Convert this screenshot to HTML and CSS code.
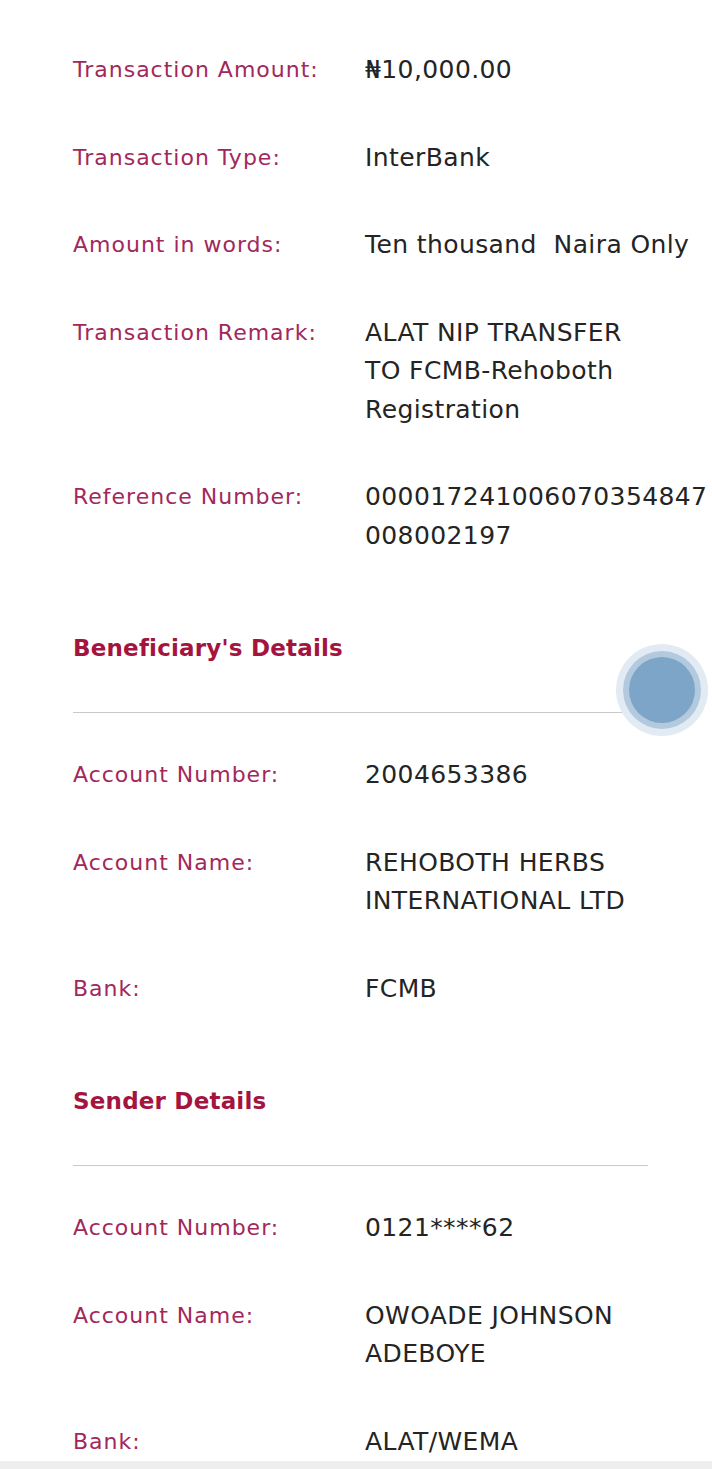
FILE: index.html
```html
<!DOCTYPE html>
<html lang="en">
<head>
<meta charset="utf-8">
<title>Transaction Details</title>
<link rel="stylesheet" href="styles.css">
</head>
<body>
<main class="page">
  <section class="rows">
    <div class="row"><div class="label">Transaction Amount:</div><div class="value">₦10,000.00</div></div>
    <div class="row"><div class="label">Transaction Type:</div><div class="value">InterBank</div></div>
    <div class="row"><div class="label">Amount in words:</div><div class="value nowrap">Ten thousand  Naira Only</div></div>
    <div class="row"><div class="label">Transaction Remark:</div><div class="value">ALAT NIP TRANSFER<br>TO FCMB-Rehoboth<br>Registration</div></div>
    <div class="row"><div class="label">Reference Number:</div><div class="value">000017241006070354847<br>008002197</div></div>
  </section>

  <h2 class="section-title">Beneficiary's Details</h2>
  <hr class="divider">
  <section class="rows">
    <div class="row"><div class="label">Account Number:</div><div class="value">2004653386</div></div>
    <div class="row"><div class="label">Account Name:</div><div class="value">REHOBOTH HERBS<br>INTERNATIONAL LTD</div></div>
    <div class="row"><div class="label">Bank:</div><div class="value">FCMB</div></div>
  </section>

  <h2 class="section-title">Sender Details</h2>
  <hr class="divider">
  <section class="rows">
    <div class="row"><div class="label">Account Number:</div><div class="value">0121****62</div></div>
    <div class="row"><div class="label">Account Name:</div><div class="value">OWOADE JOHNSON<br>ADEBOYE</div></div>
    <div class="row"><div class="label">Bank:</div><div class="value">ALAT/WEMA</div></div>
  </section>
</main>
<div class="bottom-bar"></div>
<div class="touch-dot"><div class="touch-ring"><div class="touch-core"></div></div></div>
</body>
</html>
```

FILE: styles.css
```css
html, body {
  margin: 0;
  padding: 0;
  background: #ffffff;
}
body {
  width: 712px;
  height: 1469px;
  overflow: hidden;
  position: relative;
  font-family: "DejaVu Sans", "Open Sans", sans-serif;
}
.page {
  padding: 51px 0 0 73px;
}
.rows {
  display: flex;
  flex-direction: column;
  gap: 49px;
}
.row {
  display: grid;
  grid-template-columns: 292px auto;
}
.label {
  color: #a2285b;
  font-size: 22px;
  letter-spacing: 1px;
  line-height: 38.5px;
  white-space: nowrap;
}
.value {
  color: #242424;
  font-size: 25px;
  letter-spacing: 0.4px;
  line-height: 38.5px;
  white-space: nowrap;
}
.nowrap {
  white-space: pre;
}
.section-title {
  margin: 74px 0 0 0;
  color: #a3143f;
  font-size: 23px;
  font-weight: 700;
  letter-spacing: 0.2px;
  line-height: 38px;
}
.divider {
  margin: 45px 0 43px 0;
  width: 575px;
  height: 1px;
  border: 0;
  background: #c9c9c9;
}
.bottom-bar {
  position: absolute;
  left: 0;
  right: 0;
  bottom: 0;
  height: 8px;
  background: #eeeeee;
}
.touch-dot {
  position: absolute;
  left: 616px;
  top: 644px;
  width: 92px;
  height: 92px;
  border-radius: 50%;
  background: #e2ebf3;
  display: flex;
  align-items: center;
  justify-content: center;
}
.touch-ring {
  width: 78px;
  height: 78px;
  border-radius: 50%;
  background: #b3c9de;
  display: flex;
  align-items: center;
  justify-content: center;
}
.touch-core {
  width: 66px;
  height: 66px;
  border-radius: 50%;
  background: #7ca5c8;
}
```
